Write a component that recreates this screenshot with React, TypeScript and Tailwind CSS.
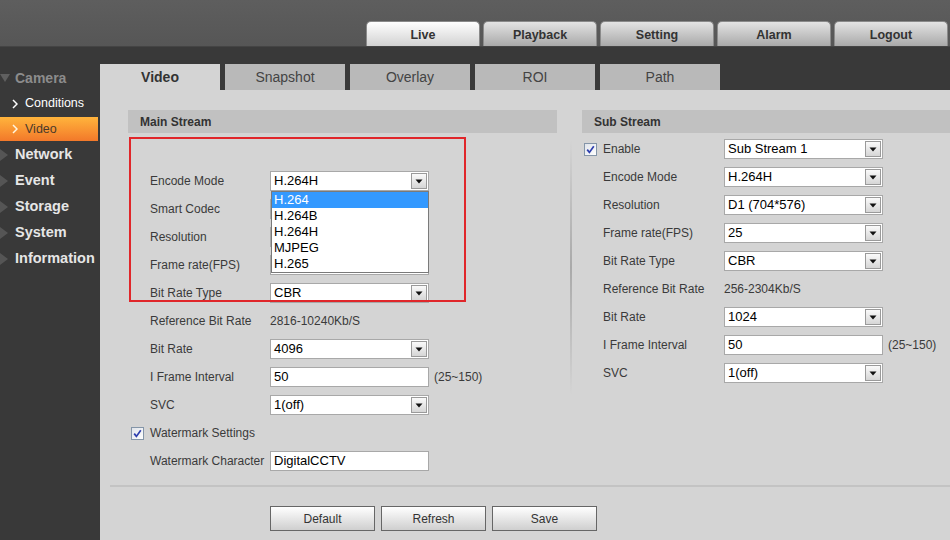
import React from 'react';

const font = { fontFamily: '"Liberation Sans", Arial, sans-serif' };

function Arrow() {
  return (
    <span className="absolute right-[1px] top-[1px] bottom-[1px] w-[16px] border border-[#9a9a9a] bg-gradient-to-b from-[#fafafa] to-[#d6d6d6] flex items-center justify-center">
      <svg width="8" height="5" viewBox="0 0 8 5">
        <polygon points="0.5,0.5 7.5,0.5 4,4.5" fill="#111" />
      </svg>
    </span>
  );
}

function Select({ value }: { value: string }) {
  return (
    <div className="relative w-[159px] h-[20px] bg-white border border-[#a8a8a8] text-[13px] leading-[18px] text-black pl-[3px]">
      {value}
      <Arrow />
    </div>
  );
}

function Input({ value }: { value: string }) {
  return (
    <div className="w-[159px] h-[20px] bg-white border border-[#a8a8a8] text-[13px] leading-[18px] text-black pl-[3px]">
      {value}
    </div>
  );
}

function Check() {
  return (
    <svg width="13" height="13" viewBox="0 0 13 13" className="shrink-0">
      <defs>
        <linearGradient id="cb" x1="0" y1="0" x2="1" y2="1">
          <stop offset="0" stopColor="#dfe3ea" />
          <stop offset="1" stopColor="#ffffff" />
        </linearGradient>
      </defs>
      <rect x="0.5" y="0.5" width="12" height="12" fill="url(#cb)" stroke="#8495a8" />
      <path d="M3.2 6.6 L5.4 9.4 L9.8 3.2" fill="none" stroke="#2e3fae" strokeWidth="1.7" />
    </svg>
  );
}

type Row = { label: string; kind: 'select' | 'input' | 'text' | 'check'; value?: string; note?: string };

function FormRow({ row, left }: { row: Row; left: boolean }) {
  const pl = left ? 'pl-[22px]' : 'pl-[21px]';
  if (row.kind === 'check') {
    return (
      <div className={`h-[28px] flex items-center ${left ? 'pl-[3px]' : 'pl-[2px]'}`}>
        <Check />
        <span className={`ml-[6px] text-[12px] text-[#3a3a3a] ${left ? '' : 'w-[121px]'}`}>{row.label}</span>
        {row.value && <Select value={row.value} />}
      </div>
    );
  }
  return (
    <div className={`h-[28px] flex items-center ${pl}`}>
      <span className={`${left ? 'w-[120px]' : 'w-[121px]'} text-[12px] text-[#3a3a3a] whitespace-nowrap`}>{row.label}</span>
      {row.kind === 'select' && <Select value={row.value!} />}
      {row.kind === 'input' && <Input value={row.value!} />}
      {row.kind === 'text' && <span className="text-[12px] text-[#3a3a3a]">{row.value}</span>}
      {row.note && <span className="ml-[5px] text-[12px] text-[#3a3a3a]">{row.note}</span>}
    </div>
  );
}

// values of the selects hidden under the open list are left blank
const mainRows: Row[] = [
  { label: 'Encode Mode', kind: 'select', value: 'H.264H' },
  { label: 'Smart Codec', kind: 'select', value: '' },
  { label: 'Resolution', kind: 'select', value: '' },
  { label: 'Frame rate(FPS)', kind: 'select', value: '' },
  { label: 'Bit Rate Type', kind: 'select', value: 'CBR' },
  { label: 'Reference Bit Rate', kind: 'text', value: '2816-10240Kb/S' },
  { label: 'Bit Rate', kind: 'select', value: '4096' },
  { label: 'I Frame Interval', kind: 'input', value: '50', note: '(25~150)' },
  { label: 'SVC', kind: 'select', value: '1(off)' },
  { label: 'Watermark Settings', kind: 'check' },
  { label: 'Watermark Character', kind: 'input', value: 'DigitalCCTV' },
];

const subRows: Row[] = [
  { label: 'Enable', kind: 'check', value: 'Sub Stream 1' },
  { label: 'Encode Mode', kind: 'select', value: 'H.264H' },
  { label: 'Resolution', kind: 'select', value: 'D1 (704*576)' },
  { label: 'Frame rate(FPS)', kind: 'select', value: '25' },
  { label: 'Bit Rate Type', kind: 'select', value: 'CBR' },
  { label: 'Reference Bit Rate', kind: 'text', value: '256-2304Kb/S' },
  { label: 'Bit Rate', kind: 'select', value: '1024' },
  { label: 'I Frame Interval', kind: 'input', value: '50', note: '(25~150)' },
  { label: 'SVC', kind: 'select', value: '1(off)' },
];

const navTabs = ['Live', 'Playback', 'Setting', 'Alarm', 'Logout'];
const subTabs = ['Video', 'Snapshot', 'Overlay', 'ROI', 'Path'];
const menu = ['Network', 'Event', 'Storage', 'System', 'Information'];

function Chevron({ color }: { color: string }) {
  return (
    <svg width="6" height="10" viewBox="0 0 6 10" className="shrink-0">
      <polyline points="1,1 5,5 1,9" fill="none" stroke={color} strokeWidth="1.5" />
    </svg>
  );
}

export default function App() {
  return (
    <div className="w-[950px] h-[540px] overflow-hidden flex flex-col bg-[#393939]" style={font}>
      <header className="h-[47px] shrink-0 bg-gradient-to-b from-[#5e5e5e] to-[#565656] flex items-end justify-end pr-[2px] gap-[3px] border-b border-[#444]">
        {navTabs.map((t, i) => (
          <div
            key={t}
            className={`w-[114px] h-[25px] pt-[3px] rounded-t-[5px] border border-b-0 border-[#8a8a8a] flex items-center justify-center text-[12.5px] font-bold text-[#333] ${
              i === 0 ? 'bg-gradient-to-b from-[#ffffff] to-[#d2d2d2]' : 'bg-gradient-to-b from-[#e4e4e4] to-[#a9a9a9]'
            }`}
          >
            {t}
          </div>
        ))}
      </header>
      <div className="flex flex-1 min-h-0">
        <aside className="w-[100px] shrink-0 pt-[18px] bg-[#393939]">
          <div className="h-[26px] flex items-center gap-[5px]">
            <svg width="10" height="8" viewBox="0 0 10 8" className="shrink-0">
              <polygon points="0,0 10,0 5,8" fill="#5f5f5f" />
            </svg>
            <span className="text-[14px] font-bold text-[#8c8c8c]">Camera</span>
          </div>
          <div className="h-[25px] flex items-center pl-[12px] gap-[7px]">
            <Chevron color="#fff" />
            <span className="text-[12.5px] text-white">Conditions</span>
          </div>
          <div className="h-[26px] py-[1px] pr-[2px]">
            <div className="h-full flex items-center pl-[12px] gap-[7px] bg-gradient-to-b from-[#ffb43c] to-[#f2782a]">
              <Chevron color="#fff6e0" />
              <span className="text-[12.5px] text-[#4a3a2a]">Video</span>
            </div>
          </div>
          {menu.map((m) => (
            <div key={m} className="h-[26px] flex items-center gap-[7px]">
              <svg width="8" height="12" viewBox="0 0 8 12" className="shrink-0">
                <polygon points="0,0 8,6 0,12" fill="#555" />
              </svg>
              <span className="text-[14.5px] font-bold text-[#e6e6e6]">{m}</span>
            </div>
          ))}
        </aside>
        <main className="flex-1 flex flex-col min-w-0">
          <div className="h-[43px] shrink-0 pt-[17px] flex gap-[5px] bg-[#393939]">
            {subTabs.map((t, i) => (
              <div
                key={t}
                className={`w-[120px] h-[26px] flex items-center justify-center text-[14px] ${
                  i === 0 ? 'bg-[#d4d4d4] font-bold text-[#333]' : 'bg-[#b9b9b9] text-[#444]'
                }`}
              >
                {t}
              </div>
            ))}
          </div>
          <div className="flex-1 bg-[#d4d4d4]">
            <div className="ml-[10px] h-[397px] border-b-2 border-[#c3c3c3] pl-[18px] pt-[20px] flex">
              <div className="relative w-[429px]">
                <div className="h-[23px] bg-[#c1c1c1] flex items-center pl-[12px] text-[12px] font-bold text-[#333]">Main Stream</div>
                <div className="mt-[34px]">
                  {mainRows.map((r) => (
                    <FormRow key={r.label} row={r} left />
                  ))}
                </div>
                <div className="absolute left-[1px] top-[27px] w-[337px] h-[165px] border-2 border-[#e0262a] pointer-events-none" />
                <div className="absolute left-[143px] top-[81px] w-[158px] border border-[#7a7a7a] bg-white text-[13px] leading-[16px] text-black">
                  {['H.264', 'H.264B', 'H.264H', 'MJPEG', 'H.265'].map((o, i) => (
                    <div key={o} className={`h-[16px] pl-[2px] ${i === 0 ? 'bg-[#3399ff] text-white' : ''}`}>
                      {o}
                    </div>
                  ))}
                </div>
              </div>
              <div className="w-[25px] shrink-0 pt-[30px] pl-[13px]">
                <div className="w-[2px] h-[255px] bg-gradient-to-b from-[#d4d4d4] via-[#a9a9a9] to-[#d4d4d4]" />
              </div>
              <div className="flex-1">
                <div className="h-[23px] bg-[#c1c1c1] flex items-center pl-[12px] text-[12px] font-bold text-[#333]">Sub Stream</div>
                <div className="mt-[2px]">
                  {subRows.map((r) => (
                    <FormRow key={r.label} row={r} left={false} />
                  ))}
                </div>
              </div>
            </div>
            <div className="mt-[19px] pl-[170px] flex gap-[6px]">
              {['Default', 'Refresh', 'Save'].map((b) => (
                <div
                  key={b}
                  className="w-[105px] h-[25px] border border-[#666] bg-gradient-to-b from-[#ffffff] to-[#cfcfcf] flex items-center justify-center text-[12px] text-[#333]"
                >
                  {b}
                </div>
              ))}
            </div>
          </div>
        </main>
      </div>
    </div>
  );
}
